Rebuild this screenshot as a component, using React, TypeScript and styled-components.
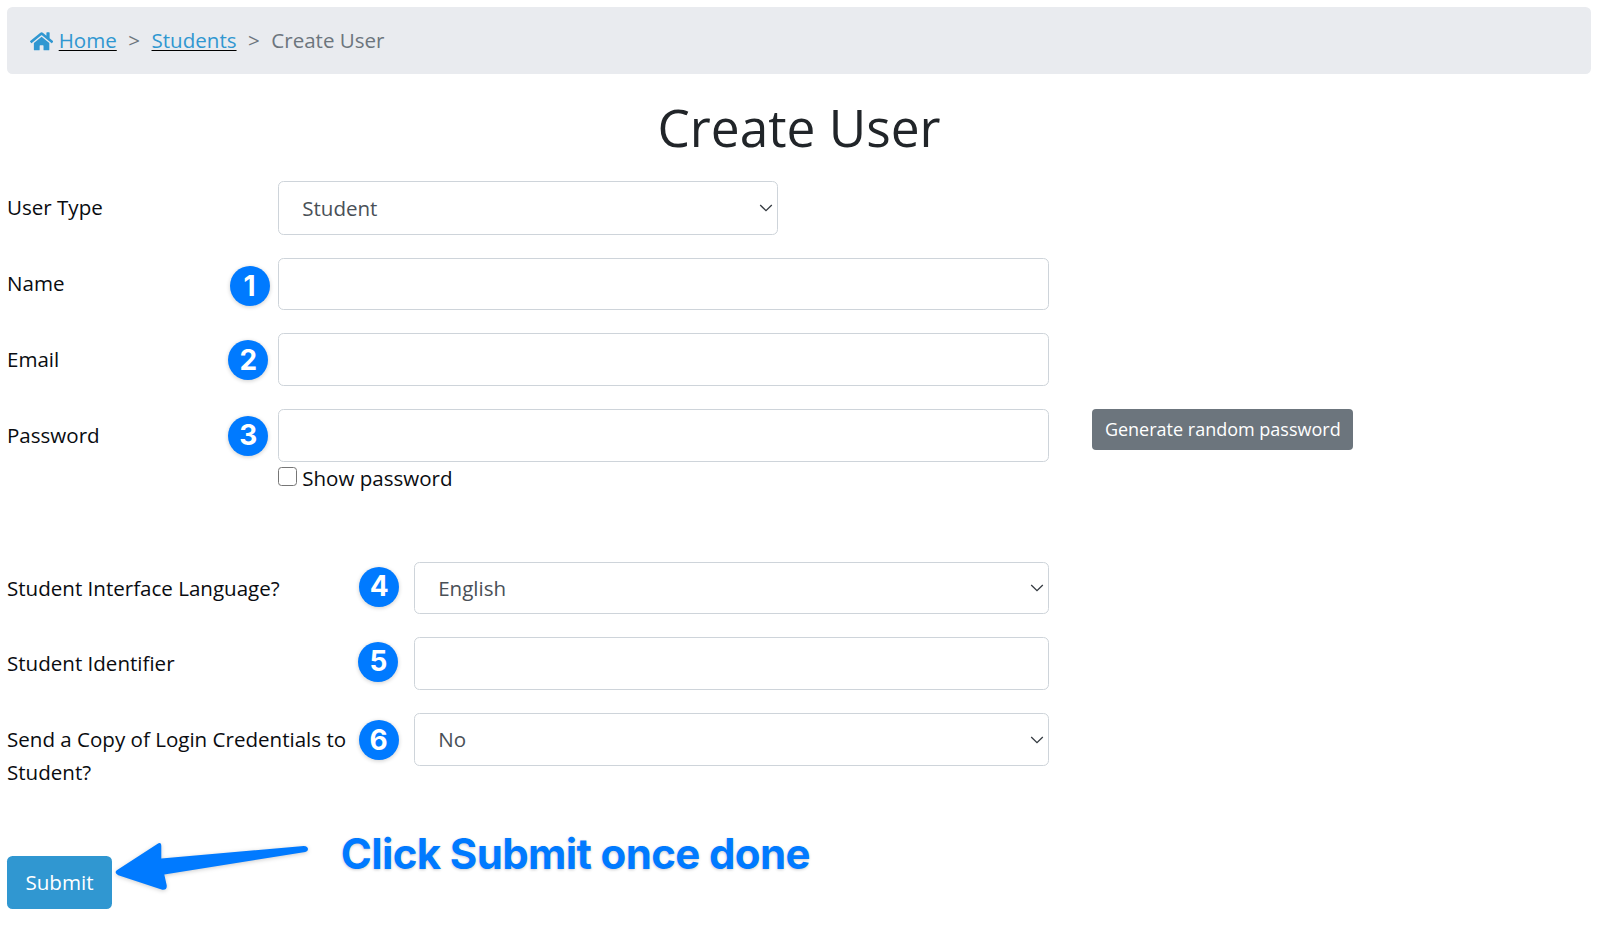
import styled, { createGlobalStyle, css } from "styled-components";
import { FaHome } from "react-icons/fa";

const color = {
  primary: "#3097d1",
  annotation: "#007aff",
  border: "#ced4da",
  grey: "#6c757d",
  input: "#495057",
  text: "#0a0c10",
};

export default function App() {
  return (
    <Page>
      <GlobalStyle />
      <Breadcrumb>
        <HomeIcon />
        <CrumbLink href="#">Home</CrumbLink>
        <Separator>&gt;</Separator>
        <CrumbLink href="#">Students</CrumbLink>
        <Separator>&gt;</Separator>
        <span>Create User</span>
      </Breadcrumb>

      <Title>Create User</Title>

      <form onSubmit={(e) => e.preventDefault()}>
        <Row $labelWidth={271.2}>
          <Label>User Type</Label>
          <SelectBox width={499.5} height={53.3} value="Student" />
        </Row>
        <Row $labelWidth={271.2}>
          <Label>Name</Label>
          <Badge $x={222.5} $y={8.5}>
            1
          </Badge>
          <Input />
        </Row>
        <Row $labelWidth={271.2}>
          <Label>Email</Label>
          <Badge $x={221.4} $y={6.8}>
            2
          </Badge>
          <Input />
        </Row>
        <Row $labelWidth={271.2}>
          <Label>Password</Label>
          <Badge $x={221.4} $y={6.6}>
            3
          </Badge>
          <div>
            <Input type="password" />
            <CheckLabel>
              <Checkbox type="checkbox" />
              Show password
            </CheckLabel>
          </div>
          <GenerateButton type="button">
            Generate random password
          </GenerateButton>
        </Row>

        <StudentFields>
          <Row $labelWidth={407.2}>
            <Label>Student Interface Language?</Label>
            <Badge $x={352.3} $y={5.2}>
              4
            </Badge>
            <SelectBox width={635.1} height={52.7} value="English" />
          </Row>
          <Row $labelWidth={407.2}>
            <Label>Student Identifier</Label>
            <Badge $x={351.4} $y={4.2}>
              5
            </Badge>
            <Input />
          </Row>
          <Row $labelWidth={407.2}>
            <Label>Send a Copy of Login Credentials to Student?</Label>
            <Badge $x={351.7} $y={7}>
              6
            </Badge>
            <SelectBox width={635.1} height={52.7} value="No" />
          </Row>
        </StudentFields>

        <Footer>
          <SubmitButton type="submit">Submit</SubmitButton>
          <Arrow viewBox="0 0 200 56">
            <path d="M6.8 29.2 L47.3 2.9 Q51.3 0.5 51.3 5 L51.3 17.6 L193.7 4.9 Q198 5 198 8.2 Q198 10.3 195.3 11 L54.3 33.6 L56.7 44.2 Q57.3 49.2 52.3 48.7 L8.3 34.3 Q3.8 31.7 6.8 29.2 Z" />
          </Arrow>
          <Note>Click Submit once done</Note>
        </Footer>
      </form>
    </Page>
  );
}

function SelectBox(props: { width: number; height: number; value: string }) {
  return (
    <Select $width={props.width} $height={props.height} tabIndex={0}>
      {props.value}
      <Chevron viewBox="0 0 14 8">
        <path d="M1.2 1 L7 6.7 L12.8 1" />
      </Chevron>
    </Select>
  );
}

const GlobalStyle = createGlobalStyle`
  *, *::before, *::after {
    box-sizing: border-box;
  }

  body {
    margin: 0;
    background-color: white;
    color: ${color.text};
    font-family: "Open Sans", sans-serif;
    font-size: 20.55px;
    line-height: 33px;
  }
`;

const Page = styled.main`
  height: 932px;
  padding: 7px 9px 0 7px;
  overflow: hidden;
`;

const Breadcrumb = styled.nav`
  display: flex;
  align-items: center;

  height: 67px;
  padding: 0 23px;

  border-radius: 5.5px;
  background-color: #e9ebef;
  color: ${color.grey};
`;

const HomeIcon = styled(FaHome)`
  width: 23.2px;
  height: 20.6px;
  margin: 1px 5.5px 0 0;
  color: ${color.primary};
`;

const CrumbLink = styled.a`
  color: ${color.primary};
  text-decoration: underline;
  text-decoration-color: black;
  text-decoration-thickness: 1.4px;
  text-underline-offset: 2px;
`;

const Separator = styled.span`
  padding: 0 11.5px;
`;

const Title = styled.h1`
  margin: 22px 0 23.3px;
  text-align: center;
  font-weight: 400;
  font-size: 51.4px;
  line-height: 62px;
  color: #212529;
`;

const Row = styled.div<{ $labelWidth: number }>`
  position: relative;
  display: grid;
  grid-template-columns: ${({ $labelWidth }) =>
    `${$labelWidth}px ${1042.3 - $labelWidth}px auto`};
  align-items: start;
  justify-content: start;
  margin-bottom: 23px;
`;

const Label = styled.label`
  padding: 9.9px 55px 0 0;
`;

const control = css`
  border: 1.4px solid ${color.border};
  border-radius: 5.5px;
  background-color: white;
  color: ${color.input};
  font: inherit;
`;

const Input = styled.input`
  ${control}
  display: block;
  width: 100%;
  height: 52.7px;
  padding: 0 23px;
`;

const Select = styled.div<{ $width: number; $height: number }>`
  ${control}
  display: flex;
  align-items: center;
  justify-content: space-between;
  width: ${({ $width }) => $width}px;
  height: ${({ $height }) => $height}px;
  padding: 0.8px 4px 0 23px;
`;

const Chevron = styled.svg`
  width: 14px;
  height: 8px;
  fill: none;
  stroke: #343a40;
  stroke-width: 1.3;
`;

/* numbered step marker laid over the form row */
const Badge = styled.span<{ $x: number; $y: number }>`
  position: absolute;
  left: ${({ $x }) => $x}px;
  top: ${({ $y }) => $y}px;

  display: flex;
  align-items: center;
  justify-content: center;

  width: 40px;
  height: 40px;
  padding-bottom: 1px;

  border-radius: 50%;
  background-color: ${color.annotation};
  box-shadow: 0 1px 4px rgba(0, 0, 0, 0.2);

  font-family: "Inter", sans-serif;
  font-weight: 700;
  font-size: 28px;
  line-height: 1;
  color: white;
`;

const CheckLabel = styled.label`
  display: flex;
  align-items: center;
  height: 33px;
`;

const Checkbox = styled.input`
  appearance: none;
  width: 19px;
  height: 19px;
  margin: 0 5px 3px 0;
  border: 1.4px solid #767676;
  border-radius: 3.5px;
  background-color: white;
`;

const button = css`
  border: 0;
  color: white;
  font-family: inherit;
  white-space: nowrap;
`;

const GenerateButton = styled.button`
  ${button}
  width: 261px;
  height: 40.6px;
  margin-left: 43px;
  padding: 0 0 0.2px;
  border-radius: 4px;
  background-color: ${color.grey};
  font-size: 18px;
`;

const StudentFields = styled.div`
  padding-top: 44px;
`;

const Footer = styled.div`
  display: flex;
  align-items: flex-start;
  padding-top: 44px;
`;

const SubmitButton = styled.button`
  ${button}
  width: 105px;
  height: 53px;
  padding: 0;
  border-radius: 5.5px;
  background-color: ${color.primary};
  font-size: 20.6px;
`;

const Arrow = styled.svg`
  width: 200px;
  height: 56px;
  margin: -15.2px 0 0 -1.8px;
  fill: ${color.annotation};
  filter: drop-shadow(0 1px 2px rgba(0, 0, 0, 0.2));
`;

const Note = styled.div`
  margin: -26.8px 0 0 30.5px;
  font-family: "Inter", sans-serif;
  font-weight: 700;
  font-size: 42px;
  line-height: 50px;
  letter-spacing: -0.63px;
  color: ${color.annotation};
  text-shadow: 0 1px 3px rgba(0, 0, 0, 0.2);
  white-space: nowrap;
`;
